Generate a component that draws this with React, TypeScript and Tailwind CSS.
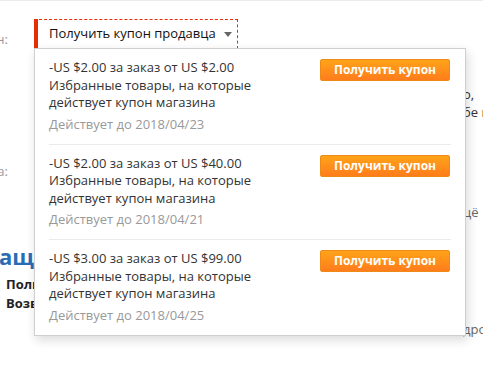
const coupons = [
  { amount: '-US $2.00 за заказ от US $2.00', until: '2018/04/23' },
  { amount: '-US $2.00 за заказ от US $40.00', until: '2018/04/21' },
  { amount: '-US $3.00 за заказ от US $99.00', until: '2018/04/25' },
];

const font = "font-['Open_Sans','Liberation_Sans',sans-serif]";

function Label({ text, className = '' }: { text: string; className?: string }) {
  return (
    <div className={`mr-[26px] flex w-[8px] shrink-0 justify-end overflow-hidden whitespace-nowrap ${className}`}>
      <span>{text}</span>
    </div>
  );
}

function Side({ text, className = '' }: { text: string; className?: string }) {
  return (
    <div className="flex">
      <div className="w-[463px] shrink-0" />
      <div className={`whitespace-nowrap ${className}`}>{text}</div>
    </div>
  );
}

export default function App() {
  return (
    <div className={`relative h-[366px] w-[483px] overflow-hidden bg-white text-[13px] text-[#333] ${font}`}>
      <div className="h-[1px] bg-[#ececec]" />

      {/* coupon row */}
      <div className="mt-[18px] flex items-start">
        <Label text="Купон:" className="mt-[12px] leading-[17px] text-[#999]" />
        <button className="relative flex h-[30px] items-center whitespace-nowrap border border-l-0 border-dashed border-[#e62e04] pl-[15px] pr-[5px] text-[13px] text-[#111]">
          <span className="absolute left-0 top-[-1px] h-[31px] w-[4px] bg-[#e62e04]" />
          Получить купон продавца
          <span className="ml-[8px] mt-[1px] h-0 w-0 border-x-[4px] border-t-[5px] border-x-transparent border-t-[#666]" />
        </button>
      </div>

      {/* page content behind the menu */}
      <div className="mt-[37px] leading-[17px]">
        <Side text="о, " />
        <Side text="бе и" className="mt-[1px]" />
      </div>
      <div className="mt-[42px] flex leading-[17px]">
        <Label text="Доставка:" className="text-[#999]" />
      </div>
      <div className="mt-[24px] leading-[17px]">
        <Side text="цё" className="text-[#666]" />
      </div>
      <div className="mt-[22px] flex">
        <div className="flex w-[34px] justify-end overflow-hidden whitespace-nowrap text-[22px] font-bold leading-[26px] text-[#2a6cb3]">
          <span>Защ</span>
        </div>
      </div>
      <div className="mt-[7px] flex flex-col gap-[2px] text-[13px] font-bold leading-[17px] text-[#222]">
        <div className="ml-[6px] w-[28px] overflow-hidden whitespace-nowrap">Полный возврат</div>
        <div className="ml-[6px] w-[28px] overflow-hidden whitespace-nowrap">Возврат денег</div>
      </div>
      <div className="mt-[9px] leading-[17px]">
        <Side text="дроп" className="text-[#666]" />
      </div>

      {/* dropdown menu */}
      <div className="absolute left-[34px] top-[48px] w-[432px] border border-[#cfcfcf] bg-white px-[14px] shadow-[2px_4px_10px_rgba(0,0,0,0.15)]">
        {coupons.map((c, i) => (
          <div
            key={i}
            className={`flex justify-between pb-[11px] pt-[10px] ${i < coupons.length - 1 ? 'border-b border-[#ebebeb]' : ''}`}
          >
            <div className="leading-[17.5px] text-[13px] text-[#333]">
              <div>{c.amount}</div>
              <div>Избранные товары, на которые</div>
              <div>действует купон магазина</div>
              <div className="mt-[3px] leading-[18px] text-[#999]">Действует до {c.until}</div>
            </div>
            <button className="mr-[1px] h-[22px] w-[130px] rounded-[2px] border border-[#f08a16] bg-gradient-to-b from-[#ffa318] to-[#ff7c1c] text-[12px] font-bold text-white">
              Получить купон
            </button>
          </div>
        ))}
      </div>
    </div>
  );
}
